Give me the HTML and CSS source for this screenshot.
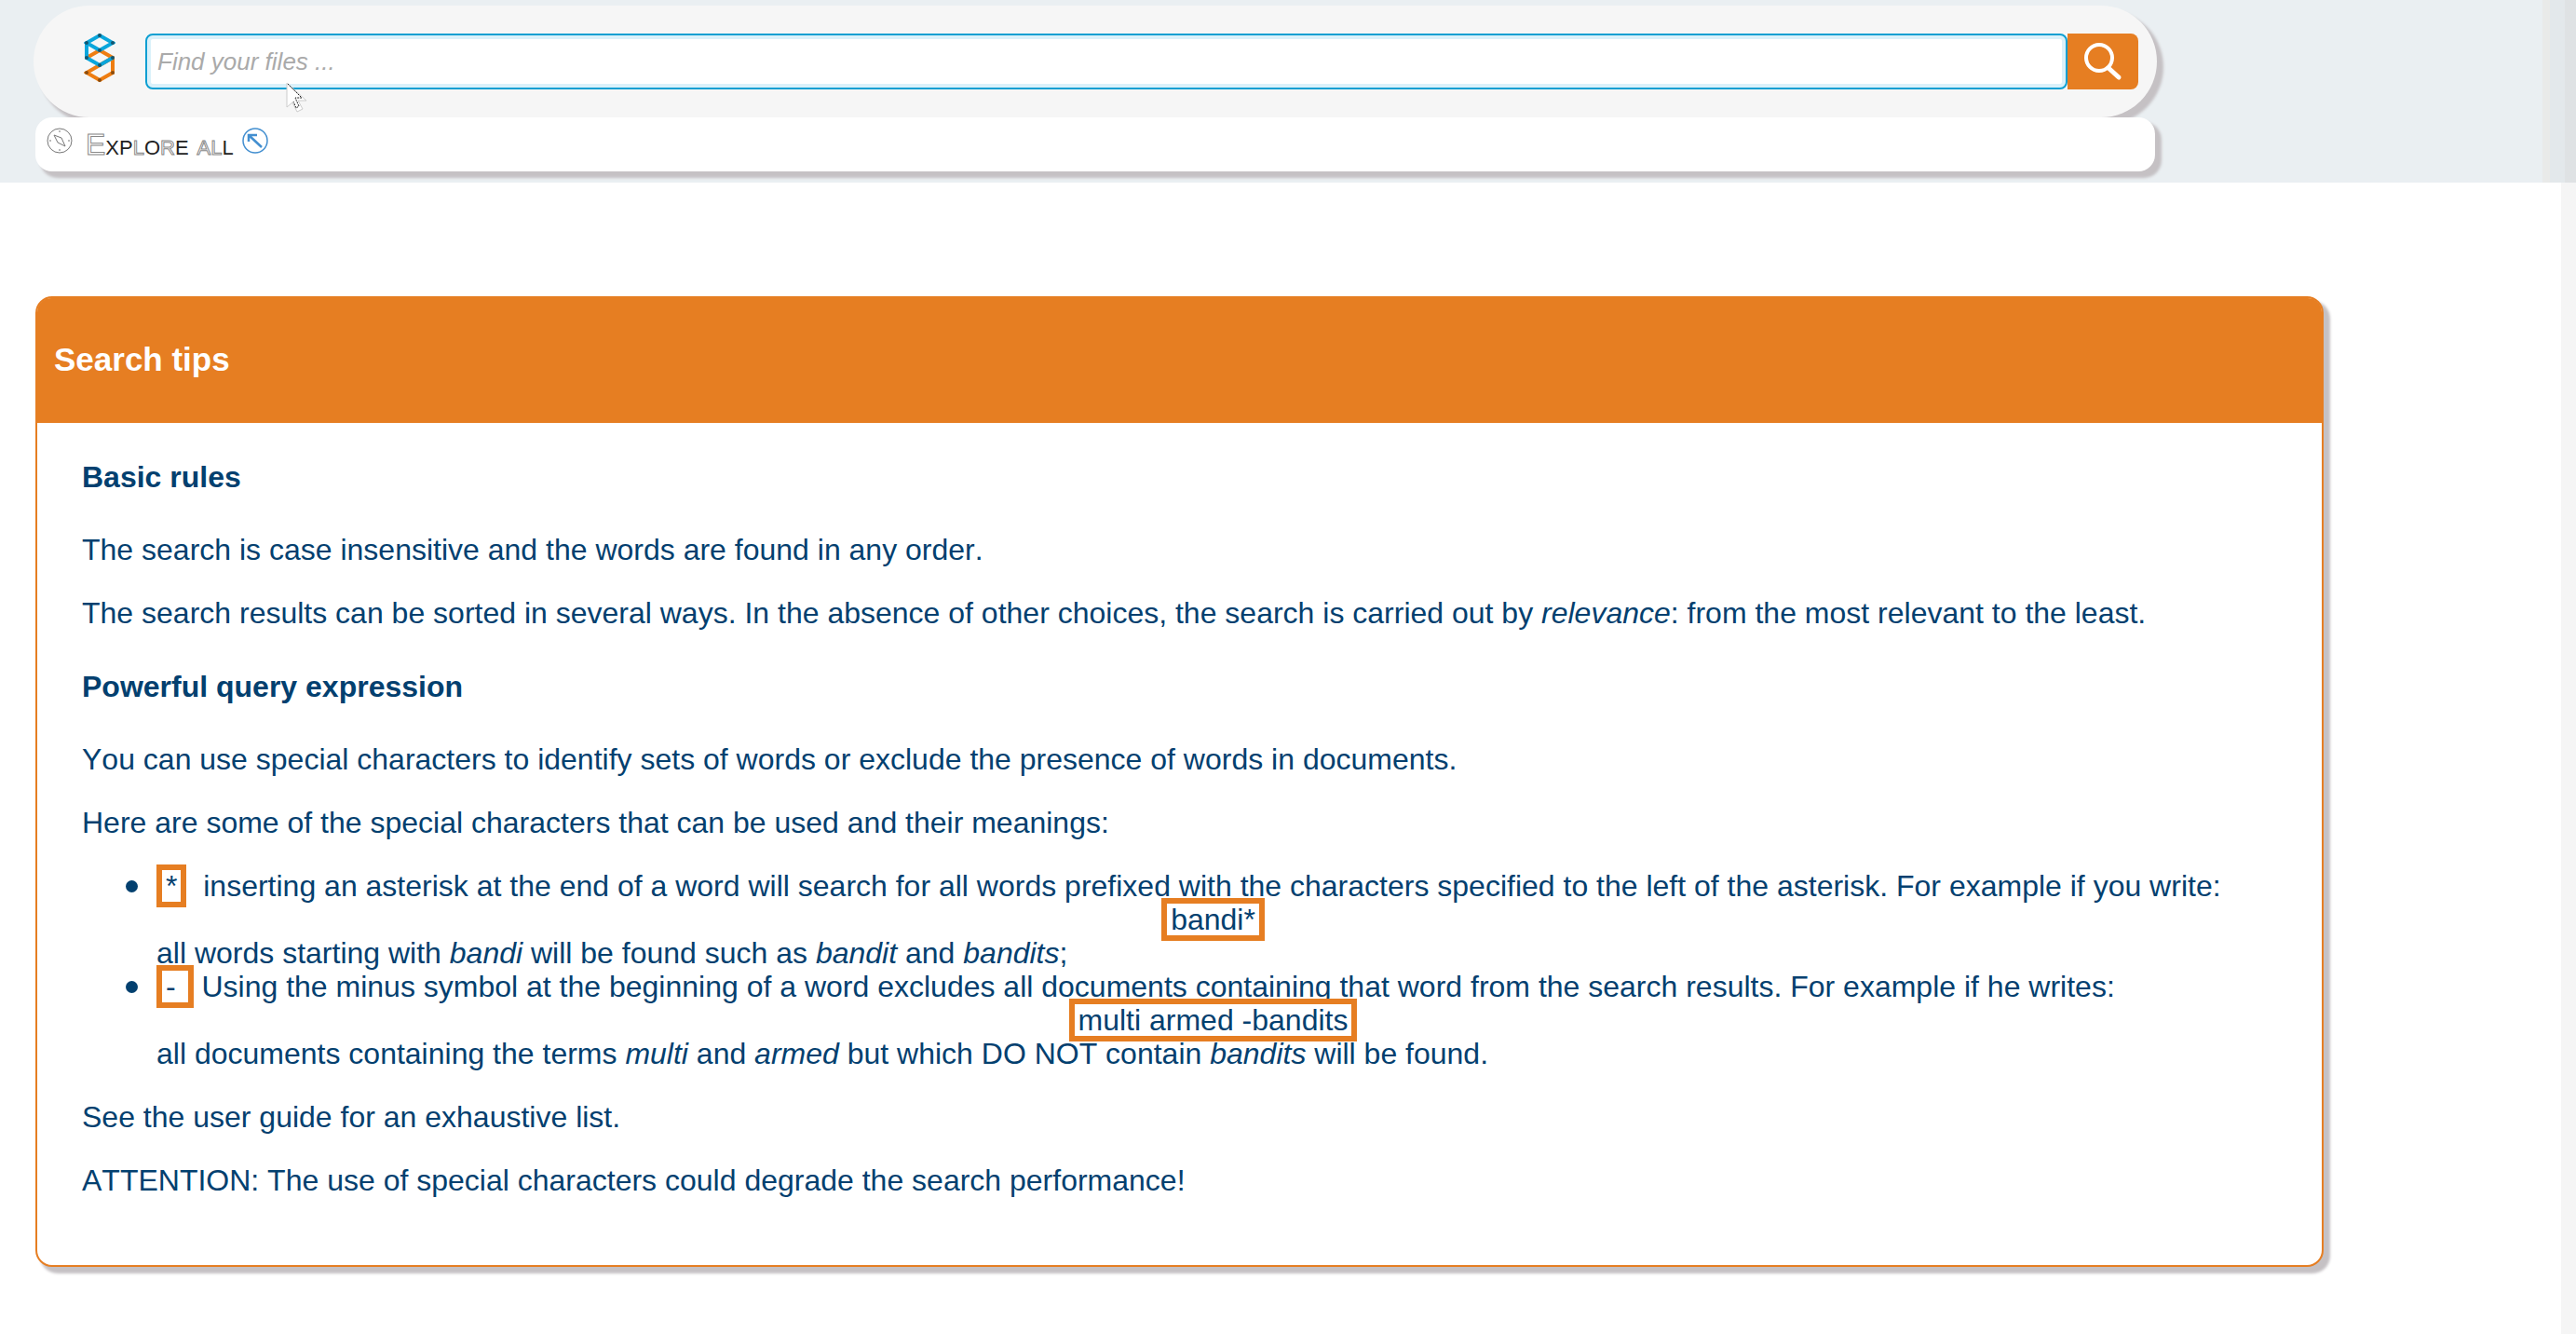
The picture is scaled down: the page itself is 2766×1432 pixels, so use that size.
FILE: index.html
```html
<!DOCTYPE html>
<html lang="en">
<head>
<meta charset="utf-8">
<title>Search tips</title>
<link rel="stylesheet" href="styles.css">
</head>
<body>
<header class="top">
  <form class="search" role="search">
    <svg class="logo" viewBox="0 0 34 54" aria-hidden="true">
      <g fill="none" stroke-width="4">
        <path stroke="#ee7d11" d="M17 19 3 27M17 19l14 8v16L17 51 3 43l14-8"/>
        <path stroke="#ee7d11" d="M17 35l14-8"/>
        <path stroke="#0aa6dc" d="M17 19 3 11 17 3l14 8-14 8M3 11v16l14 8 14-8"/>
      </g>
      <g fill="#14566f">
        <circle cx="17" cy="3" r="2"/><circle cx="3" cy="11" r="2"/><circle cx="31" cy="11" r="2"/><circle cx="17" cy="19" r="2"/><circle cx="3" cy="27" r="2"/><circle cx="31" cy="27" r="2"/><circle cx="17" cy="35" r="2"/>
      </g>
      <g fill="#8a4d10"><circle cx="3" cy="43" r="2"/><circle cx="31" cy="43" r="2"/><circle cx="17" cy="51" r="2"/></g>
    </svg>
    <input class="field" type="text" placeholder="Find your files ..." aria-label="Find your files">
    <button class="go" type="submit" aria-label="Search">
      <svg viewBox="0 0 42 42" aria-hidden="true"><circle cx="17" cy="17" r="14" fill="none" stroke="#fff" stroke-width="4"/><path d="M27 28 38 38" stroke="#fff" stroke-width="5" stroke-linecap="round"/></svg>
    </button>
  </form>
  <nav class="explore">
    <svg class="compass" viewBox="0 0 28 28" fill="none" stroke="#777" aria-hidden="true"><circle cx="14" cy="14" r="13"/><path d="M8 8l8 3 4 9-8-4z"/><path d="M14 3v2M14 23v2M3 14h2M23 14h2"/></svg>
    <a class="all" href="#">E<b>xp</b>l<b>o</b>r<b>e</b> al<b>l</b></a>
    <svg class="arrow" viewBox="0 0 28 28" fill="none" stroke="#438fd0" aria-hidden="true"><circle cx="14" cy="14" r="13" stroke-width="1.5"/><path stroke-width="2.5" d="M21 21 7 8M7 15V8h9"/></svg>
  </nav>
  <svg class="pointer" viewBox="0 0 24 36" aria-hidden="true"><path fill="#fff" stroke="#ccc" d="M2 2v26l6-5 5 10 6-3-5-9h9z"/><path fill="none" stroke="#222" stroke-dasharray="2 1" d="M3 3l15 15h-7l4 9-3 2-3-7"/></svg>
</header>
<main class="card">
  <h1 class="title">Search tips</h1>
  <div class="body">
    <h2>Basic rules</h2>
    <p>The search is case insensitive and the words are found in any order.</p>
    <p>The search results can be sorted in several ways. In the absence of other choices, the search is carried out by <em>relevance</em>: from the most relevant to the least.</p>
    <h2>Powerful query expression</h2>
    <p>You can use special characters to identify sets of words or exclude the presence of words in documents.</p>
    <p>Here are some of the special characters that can be used and their meanings:</p>
    <ul>
      <li><span class="key">*</span>&nbsp; inserting an asterisk at the end of a word will search for all words prefixed with the characters specified to the left of the asterisk. For example if you write:
        <div class="sample"><span class="key">bandi*</span></div>
        all words starting with <em>bandi</em> will be found such as <em>bandit</em> and <em>bandits</em>;</li>
      <li><span class="key">-&nbsp;</span> Using the minus symbol at the beginning of a word excludes all documents containing that word from the search results. For example if he writes:
        <div class="sample"><span class="key">multi armed -bandits</span></div>
        all documents containing the terms <em>multi</em> and <em>armed</em> but which DO NOT contain <em>bandits</em> will be found.</li>
    </ul>
    <p>See the user guide for an exhaustive list.</p>
    <p>ATTENTION: The use of special characters could degrade the search performance!</p>
  </div>
</main>
</body>
</html>
```
FILE: styles.css
```css
* { box-sizing: border-box; }
html { min-height: 100%; background: linear-gradient(#f5f5f5, #f5f5f5) right / 16px 100% no-repeat #fff; }
body {
  margin: 0;
  font: 32px/36px "Liberation Sans", Arial, sans-serif;
  font-kerning: none;
  color: #03406f;
}

.top {
  position: relative;
  padding: 6px 450px 12px 36px;
  background: linear-gradient(to left, #dfe2e4 12px, #e3e8eb 12px, #e3e8eb 28px, #e9eae9 28px, #e9eae9 36px, #eaeff2 36px);
}
.search {
  display: flex;
  align-items: center;
  height: 120px;
  padding: 0 20px 0 54px;
  border-radius: 60px;
  background: #f6f6f6;
  box-shadow: 6px 6px 3px 1px #c5c1c4;
}
.logo { width: 34px; height: 54px; margin: 0 32px 8px 0; }
.field {
  flex: 1;
  height: 60px;
  padding: 0 11px;
  border: 2px solid #0c9fd2;
  border-radius: 8px;
  background: #fff;
  box-shadow: inset 0 0 0 4px #daf1fa;
  font: italic 26px "Liberation Sans", Arial, sans-serif;
  outline: 0;
}
.field::placeholder { color: #aaa; opacity: 1; }
.go {
  display: flex;
  align-items: center;
  justify-content: center;
  width: 76px;
  height: 60px;
  padding: 0;
  border: 0;
  border-radius: 0 8px 8px 0;
  background: #e67e22;
}
.go svg { width: 42px; height: 42px; }
.explore {
  position: relative;
  display: flex;
  align-items: center;
  height: 58px;
  margin: 0 2px;
  padding: 0 12px;
  border-radius: 18px;
  background: #fff;
  box-shadow: 6px 6px 3px 1px #c5c1c4;
}
.compass, .arrow { width: 28px; height: 28px; margin-bottom: 8px; }
.compass { margin-right: 14px; }
.arrow { margin-left: 9px; }
.all {
  font-variant: small-caps;
  text-decoration: none;
  color: #fff;
  -webkit-text-stroke: 1px #888;
}
.all b { font-weight: 400; color: #222; -webkit-text-stroke: 0; }
.pointer { position: absolute; left: 306px; top: 87px; width: 24px; height: 36px; }

.card {
  margin: 122px 271px 60px 38px;
  border: 2px solid #e67e22;
  border-radius: 18px;
  background: #fff;
  box-shadow: 6px 6px 3px 1px #c5c1c4;
}
.title {
  margin: 0;
  padding: 46px 18px 48px;
  border-radius: 15px 15px 0 0;
  background: #e67e22;
  color: #fff;
  font-size: 35px;
  line-height: 40px;
}
.body { padding: 40px 56px 41px 48px; }
h2 { margin: 43px 0 42px; font-size: 32px; line-height: 36px; }
.body > h2:first-child { margin-top: 0; }
p, ul { margin: 32px 0; }
ul { padding-left: 80px; list-style: none; }
li::before {
  content: "";
  display: inline-block;
  width: 13px;
  height: 13px;
  margin: 0 20px 0 -33px;
  border-radius: 50%;
  background: currentColor;
  vertical-align: 4px;
}
.key {
  display: inline-block;
  margin: -8px 0;
  padding: 0 4px;
  border: 6px solid #e67e22;
  background: #fff;
  line-height: 34px;
}
.sample { text-align: center; }
```
